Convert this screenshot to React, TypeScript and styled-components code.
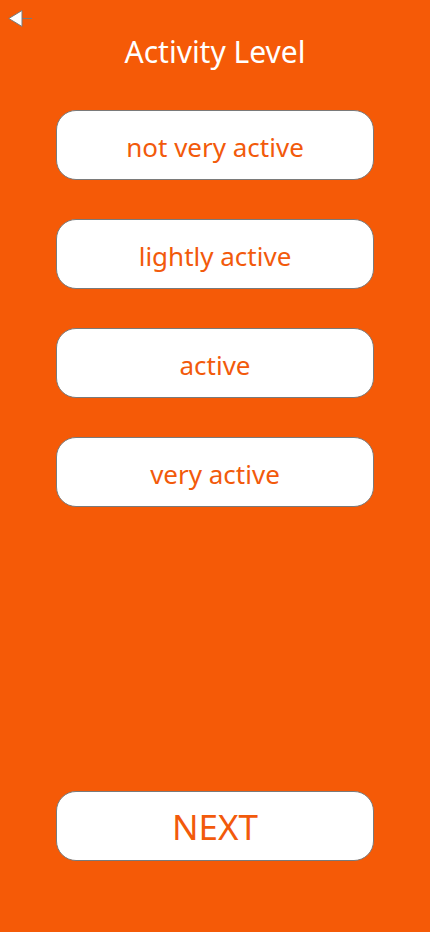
import React from "react";
import styled, { createGlobalStyle } from "styled-components";

const Global = createGlobalStyle`
  html, body { margin: 0; padding: 0; background: #f55a07; }
  * { box-sizing: border-box; }
`;

const Page = styled.div`
  width: 430px;
  height: 932px;
  background: #f55a07;
  display: flex;
  flex-direction: column;
  align-items: center;
  font-family: "Noto Sans", "Open Sans", sans-serif;
  position: relative;
`;

const BackButton = styled.button`
  position: absolute;
  left: 8px;
  top: 9px;
  width: 26px;
  height: 20px;
  padding: 0;
  border: none;
  background: transparent;
  display: flex;
`;

const Title = styled.h1`
  margin: 32px 0 0;
  font-size: 30px;
  font-weight: 400;
  color: #ffffff;
  line-height: 40px;
`;

const Options = styled.div`
  display: flex;
  flex-direction: column;
  gap: 39px;
  margin-top: 38px;
`;

const Pill = styled.button<{ $big?: boolean }>`
  width: 318px;
  height: 70px;
  border-radius: 20px;
  border: 1px solid #7a7a7a;
  background: #ffffff;
  color: #f25a0b;
  font-family: "Noto Sans", "Open Sans", sans-serif;
  font-size: ${(p) => (p.$big ? "35px" : "26px")};
  font-weight: 400;
  display: flex;
  align-items: center;
  justify-content: center;
  padding: ${(p) => (p.$big ? "0" : "3px 0 0")};
`;

const Spacer = styled.div`
  flex: 1;
`;

const Footer = styled.div`
  margin-bottom: 71px;
`;

export default function App() {
  const items = ["not very active", "lightly active", "active", "very active"];
  return (
    <>
      <Global />
      <Page>
        <BackButton aria-label="back">
          <svg width="26" height="20" viewBox="0 0 26 20">
            <line x1="14" y1="9.5" x2="24" y2="9.5" stroke="#7a7a7a" strokeWidth="1" />
            <polygon points="0.8,9.5 14,1.5 14,17.5" fill="#ffffff" stroke="#7a7a7a" strokeWidth="1" />
          </svg>
        </BackButton>
        <Title>Activity Level</Title>
        <Options>
          {items.map((t) => (
            <Pill key={t}>{t}</Pill>
          ))}
        </Options>
        <Spacer />
        <Footer>
          <Pill $big>NEXT</Pill>
        </Footer>
      </Page>
    </>
  );
}
